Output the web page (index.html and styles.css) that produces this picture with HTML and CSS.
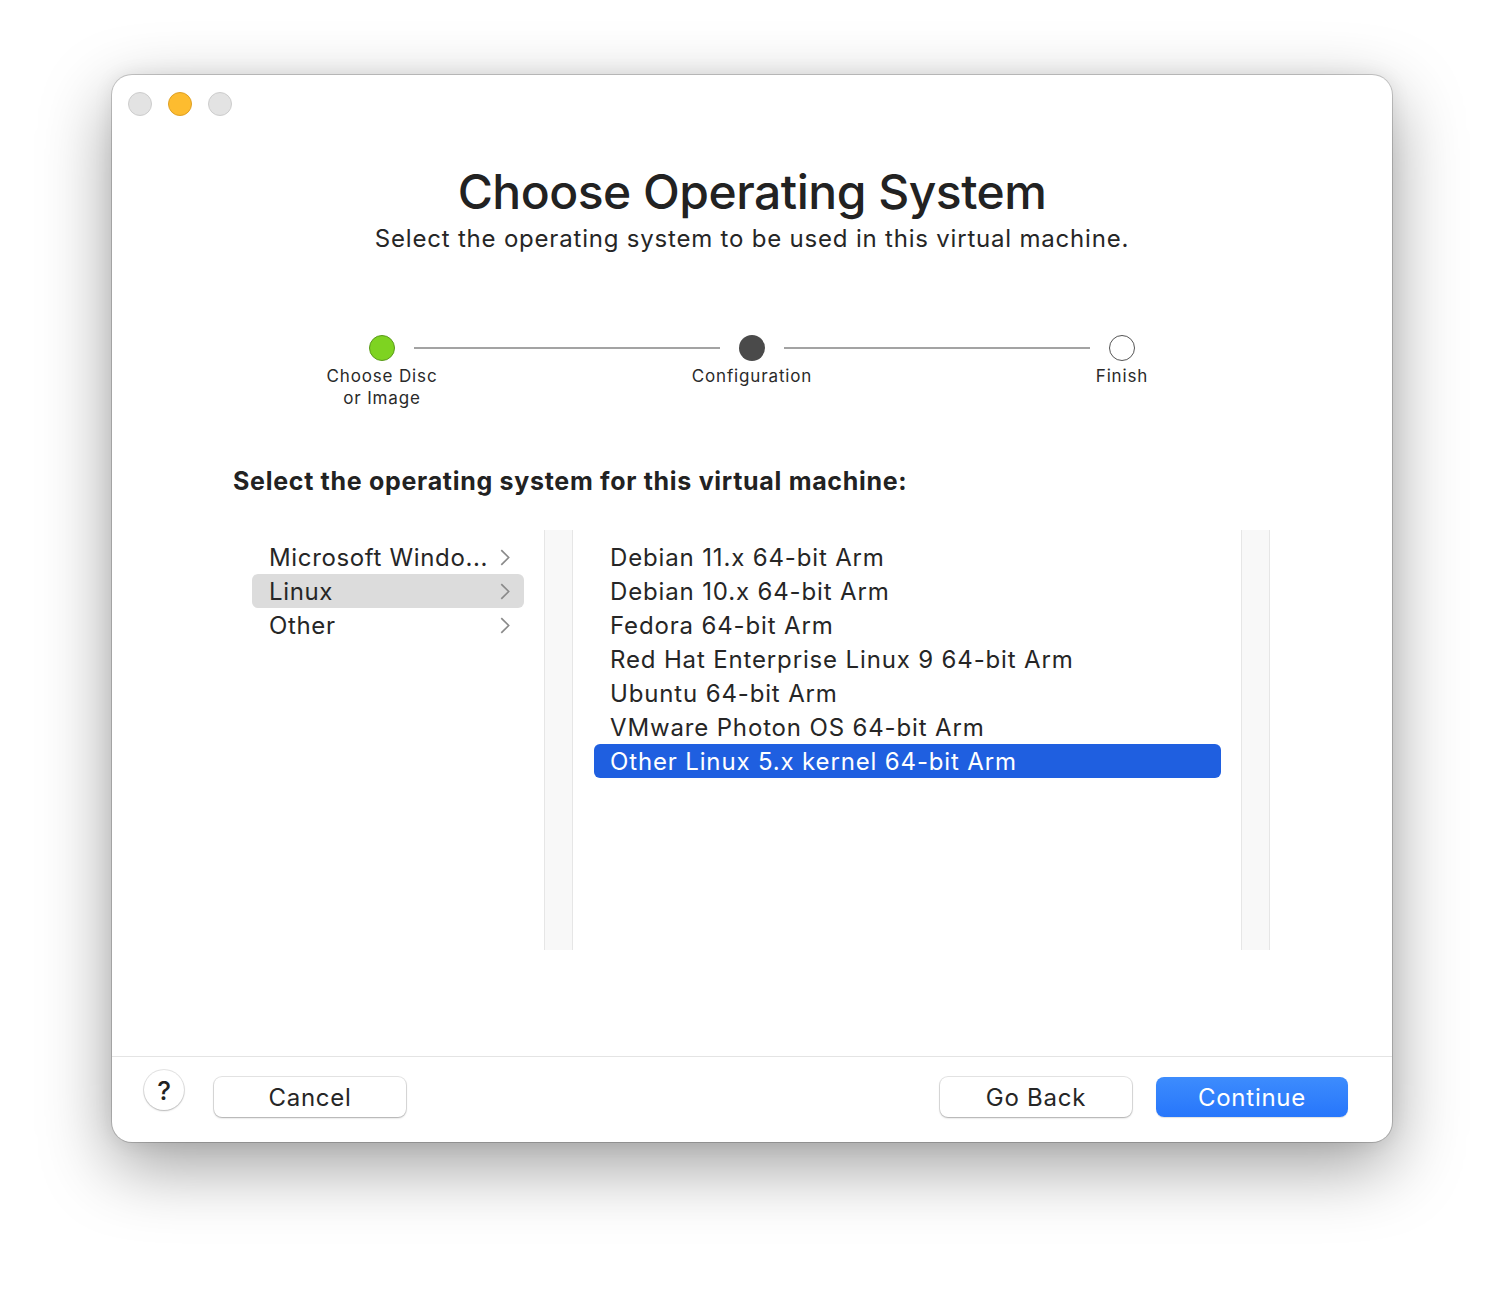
FILE: index.html
```html
<!DOCTYPE html>
<html>
<head>
<meta charset="utf-8">
<link rel="stylesheet" href="styles.css">
</head>
<body>
<div class="window">
  <div class="titlebar">
    <span class="light gray"></span>
    <span class="light yellow"></span>
    <span class="light gray"></span>
  </div>
  <div class="header">
    <h1 class="title">Choose Operating System</h1>
    <p class="subtitle">Select the operating system to be used in this virtual machine.</p>
  </div>
  <div class="steps">
    <div class="step">
      <span class="dot done"></span>
      <span class="step-label">Choose Disc<br>or Image</span>
    </div>
    <div class="connector"></div>
    <div class="step">
      <span class="dot current"></span>
      <span class="step-label">Configuration</span>
    </div>
    <div class="connector"></div>
    <div class="step">
      <span class="dot todo"></span>
      <span class="step-label">Finish</span>
    </div>
  </div>
  <h2 class="prompt">Select the operating system for this virtual machine:</h2>
  <div class="browser">
    <div class="column col-families">
      <div class="row"><span>Microsoft Windo...</span><svg class="chev" viewBox="0 0 12 18"><path d="M2 2 L9 9 L2 16"/></svg></div>
      <div class="row row-active"><span>Linux</span><svg class="chev" viewBox="0 0 12 18"><path d="M2 2 L9 9 L2 16"/></svg></div>
      <div class="row"><span>Other</span><svg class="chev" viewBox="0 0 12 18"><path d="M2 2 L9 9 L2 16"/></svg></div>
    </div>
    <div class="divider"></div>
    <div class="column col-versions">
      <div class="row">Debian 11.x 64-bit Arm</div>
      <div class="row">Debian 10.x 64-bit Arm</div>
      <div class="row">Fedora 64-bit Arm</div>
      <div class="row">Red Hat Enterprise Linux 9 64-bit Arm</div>
      <div class="row">Ubuntu 64-bit Arm</div>
      <div class="row">VMware Photon OS 64-bit Arm</div>
      <div class="row row-selected">Other Linux 5.x kernel 64-bit Arm</div>
    </div>
    <div class="divider"></div>
  </div>
  <div class="footer">
    <button class="help">?</button>
    <button class="btn">Cancel</button>
    <div class="spacer"></div>
    <button class="btn">Go Back</button>
    <button class="btn btn-primary">Continue</button>
  </div>
</div>
</body>
</html>
```

FILE: styles.css
```css
* { box-sizing: border-box; }
html, body {
  margin: 0;
  padding: 0;
  background: #ffffff;
}
body {
  font-family: Inter, "Noto Sans", "Liberation Sans", sans-serif;
  color: #262626;
  padding: 75px 0 0 112px;
  height: 1290px;
  overflow: hidden;
}
.window {
  width: 1280px;
  height: 1067px;
  background: #ffffff;
  border-radius: 20px;
  box-shadow: 0 0 0 1px rgba(0,0,0,0.18), 0 24px 70px rgba(0,0,0,0.38), 0 0 20px rgba(0,0,0,0.08);
  display: flex;
  flex-direction: column;
}
.titlebar {
  display: flex;
  gap: 16px;
  padding: 17px 0 0 16px;
  height: 58px;
}
.light {
  width: 24px;
  height: 24px;
  border-radius: 50%;
  display: block;
}
.light.gray { background: #e3e3e3; border: 1px solid #cdcdcd; }
.light.yellow { background: #fdbc2f; border: 1px solid #dfa024; }
.header {
  text-align: center;
}
.title {
  margin: 30px 0 0;
  font-size: 48px;
  font-weight: 500;
  line-height: 58px;
  color: #222;
  letter-spacing: -0.5px;
}
.subtitle {
  margin: 2px 0 0;
  font-size: 24px;
  line-height: 32px;
  color: #262626;
  letter-spacing: 0.8px;
}
.steps {
  display: flex;
  align-items: flex-start;
  margin: 80px 0 0 238px;
  width: 804px;
}
.step {
  width: 64px;
  display: flex;
  flex-direction: column;
  align-items: center;
}
.dot {
  width: 26px;
  height: 26px;
  border-radius: 50%;
  display: block;
}
.dot.done { background: #7ed321; border: 1px solid #5a9a1a; }
.dot.current { background: #4a4a4a; }
.dot.todo { background: #fff; border: 1px solid #555; }
.step-label {
  white-space: nowrap;
  text-align: center;
  font-size: 17px;
  line-height: 22px;
  margin-top: 4px;
  color: #2a2a2a;
  letter-spacing: 0.85px;
}
.connector {
  flex: 1;
  height: 2px;
  background: #a3a3a3;
  margin-top: 12px;
}
.prompt {
  margin: 56px 0 0 121px;
  font-size: 25px;
  font-weight: 700;
  line-height: 32px;
  color: #222;
  letter-spacing: 0.7px;
}
.browser {
  display: flex;
  margin: 33px 0 0 120px;
  height: 420px;
}
.column {
  padding: 10px 20px;
}
.col-families { width: 312px; }
.col-versions { width: 668px; padding-left: 21px; }
.divider {
  width: 29px;
  background: #f8f8f8;
  border-left: 1px solid #e6e6e6;
  border-right: 1px solid #e6e6e6;
}
.row {
  height: 34px;
  display: flex;
  align-items: center;
  padding: 0 12px 0 17px;
  font-size: 24px;
  border-radius: 6px;
  white-space: nowrap;
  color: #262626;
  letter-spacing: 0.85px;
}
.col-families .row { justify-content: space-between; letter-spacing: 0.65px; }
.col-versions .row { padding-left: 16px; }
.row-active { background: #dcdcdc; }
.row-selected { background: #1f5fe0; color: #fff; }
.chev {
  width: 13px;
  height: 19px;
  fill: none;
  stroke: #8a8a8a;
  stroke-width: 1.6;
}
.footer {
  margin-top: auto;
  height: 86px;
  border-top: 1px solid #e4e4e4;
  display: flex;
  align-items: flex-start;
  padding: 20px 44px 0 32px;
  gap: 24px;
}
.spacer { flex: 1; }
button {
  font-family: inherit;
  cursor: default;
}
.help {
  width: 40px;
  height: 40px;
  border-radius: 50%;
  background: #fff;
  border: none;
  box-shadow: 0 0 0 1px rgba(0,0,0,0.1), 0 1px 2px rgba(0,0,0,0.2);
  font-size: 26px;
  font-weight: 500;
  color: #222;
  padding: 0;
  margin-top: -7px;
  margin-right: 6px;
}
.btn {
  width: 192px;
  height: 40px;
  border-radius: 8px;
  border: none;
  background: #fff;
  box-shadow: 0 0 0 1px rgba(0,0,0,0.1), 0 1px 2px rgba(0,0,0,0.25);
  font-size: 24px;
  color: #262626;
  padding: 0;
  letter-spacing: 0.75px;
}
.btn-primary {
  background: linear-gradient(#3d8cfd, #2776fb);
  color: #fff;
  box-shadow: 0 1px 1px rgba(0,0,0,0.12);
}
```
